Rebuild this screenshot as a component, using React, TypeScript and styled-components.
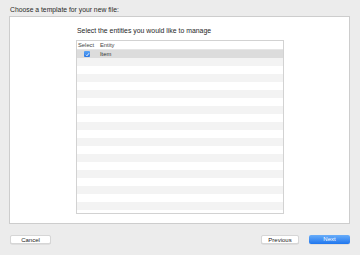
import styled, { createGlobalStyle } from 'styled-components'

const GlobalStyle = createGlobalStyle`
  html, body {
    margin: 0;
    padding: 0;
    background: #ececec;
    font-family: "Liberation Sans", Arial, sans-serif;
  }
`

const Page = styled.div`
  width: 360px;
  height: 255px;
  box-sizing: border-box;
  padding: 5px 10px 0 9px;
  display: flex;
  flex-direction: column;
`

const Title = styled.div`
  font-size: 6.8px;
  line-height: 10px;
  color: #2a2a2a;
  padding-left: 1px;
  height: 11px;
`

const Panel = styled.div`
  height: 208px;
  box-sizing: border-box;
  background: #fff;
  border: 1px solid #cdcdcd;
  padding: 9px 0 0 66px;
`

const Inner = styled.div`
  width: 208px;
  display: flex;
  flex-direction: column;
`

const Heading = styled.div`
  font-size: 6.9px;
  line-height: 10px;
  color: #1e1e1e;
  height: 14px;
  padding-left: 1px;
`

const Table = styled.div`
  height: 174px;
  box-sizing: border-box;
  border: 1px solid #d2d2d2;
  overflow: hidden;
  display: flex;
  flex-direction: column;
`

const HeaderRow = styled.div`
  height: 8px;
  flex: none;
  display: flex;
  align-items: center;
  font-size: 5.8px;
  color: #444;
  border-bottom: 1px solid #e6e6e6;
`

const Row = styled.div<{ $odd?: boolean; $selected?: boolean }>`
  height: 8px;
  flex: none;
  display: flex;
  align-items: center;
  font-size: 5.8px;
  color: #333;
  background: ${p => (p.$selected ? '#dcdcdc' : p.$odd ? '#f3f3f3' : '#fff')};
`

const SelectCell = styled.div<{ $pad: number }>`
  width: 23px;
  padding-left: ${p => p.$pad}px;
  box-sizing: border-box;
  display: flex;
`

const EntityCell = styled.div`
  flex: 1;
`

const Check = styled.div`
  width: 6px;
  height: 6px;
  border-radius: 1px;
  background: linear-gradient(#5aa4f6, #2a78e4);
  display: flex;
  align-items: center;
  justify-content: center;
  svg {
    width: 5px;
    height: 5px;
  }
`

const Footer = styled.div`
  display: flex;
  align-items: center;
  padding-top: 11px;
  padding-left: 1px;
  gap: 10px;
`

const Spacer = styled.div`
  flex: 1;
`

const Button = styled.button<{ $primary?: boolean; $w: number }>`
  width: ${p => p.$w}px;
  height: 9px;
  padding: 0;
  font-family: "Liberation Sans", Arial, sans-serif;
  font-size: 6px;
  line-height: 9px;
  border-radius: 2px;
  border: ${p => (p.$primary ? '0' : '1px solid #d6d6d6')};
  background: ${p => (p.$primary ? 'linear-gradient(#69adf9, #1f76ee)' : '#fff')};
  color: ${p => (p.$primary ? '#fff' : '#222')};
  box-shadow: 0 0.5px 0.5px rgba(0, 0, 0, 0.12);
  box-sizing: border-box;
`

const rows = Array.from({ length: 21 }, (_, i) => i)

export default function App() {
  return (
    <>
      <GlobalStyle />
      <Page>
        <Title>Choose a template for your new file:</Title>
        <Panel>
          <Inner>
            <Heading>Select the entities you would like to manage</Heading>
            <Table>
              <HeaderRow>
                <SelectCell $pad={1}>Select</SelectCell>
                <EntityCell>Entity</EntityCell>
              </HeaderRow>
              {rows.map(i =>
                i === 0 ? (
                  <Row key={i} $selected>
                    <SelectCell $pad={7}>
                      <Check>
                        <svg viewBox="0 0 10 10">
                          <path d="M2 5.5 L4 7.5 L8 2.5" stroke="#fff" strokeWidth="1.8" fill="none" />
                        </svg>
                      </Check>
                    </SelectCell>
                    <EntityCell>Item</EntityCell>
                  </Row>
                ) : (
                  <Row key={i} $odd={i % 2 === 1} />
                )
              )}
            </Table>
          </Inner>
        </Panel>
        <Footer>
          <Button $w={41}>Cancel</Button>
          <Spacer />
          <Button $w={38}>Previous</Button>
          <Button $w={41} $primary>Next</Button>
        </Footer>
      </Page>
    </>
  )
}
